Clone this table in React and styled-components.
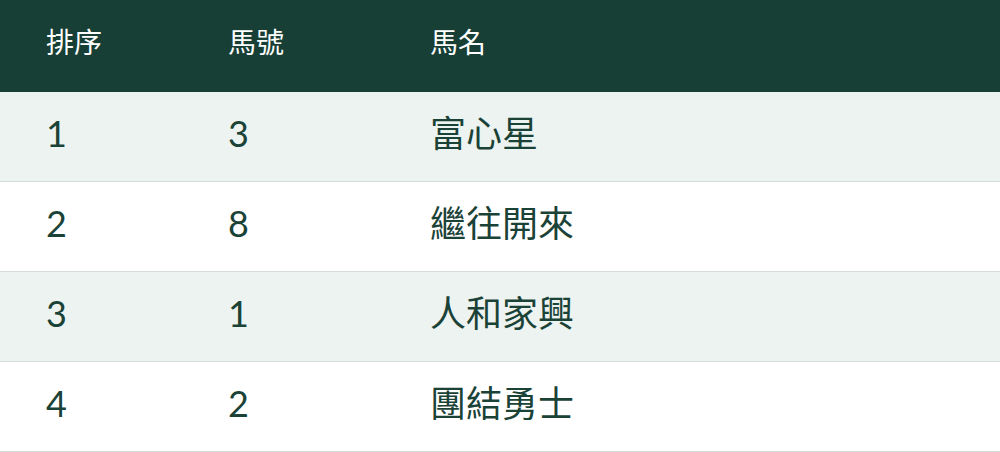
import React from "react";
import styled, { createGlobalStyle } from "styled-components";

const GlobalStyle = createGlobalStyle`
  body {
    margin: 0;
    background: #ffffff;
    font-family: Lato, "Noto Sans CJK TC", sans-serif;
  }
`;

const Table = styled.div`
  width: 1000px;
  display: flex;
  flex-direction: column;
`;

const Row = styled.div`
  display: grid;
  grid-template-columns: 182px 202px 1fr;
  align-items: center;
  padding-left: 46px;
  box-sizing: border-box;
  height: ${props => (props.head ? 92 : 90)}px;
  background: ${props =>
    props.head ? "#173f36" : props.shaded ? "#edf3f0" : "#ffffff"};
  border-bottom: ${props => (props.head ? "none" : "1px solid #d4dbd8")};
`;

const HeadCell = styled.div`
  color: #ffffff;
  font-size: 28px;
  line-height: 1;
  margin-top: -9px;
`;

const Cell = styled.div`
  color: #1b4237;
  font-size: 36px;
  line-height: 1;
  margin-top: -7px;
`;

const horses = [
  { rank: 1, num: 3, name: "富心星" },
  { rank: 2, num: 8, name: "繼往開來" },
  { rank: 3, num: 1, name: "人和家興" },
  { rank: 4, num: 2, name: "團結勇士" }
];

export default function App() {
  return (
    <>
      <GlobalStyle />
      <Table>
        <Row head>
          <HeadCell>排序</HeadCell>
          <HeadCell>馬號</HeadCell>
          <HeadCell>馬名</HeadCell>
        </Row>
        {horses.map((h, i) => (
          <Row key={h.rank} shaded={i % 2 === 0}>
            <Cell>{h.rank}</Cell>
            <Cell>{h.num}</Cell>
            <Cell>{h.name}</Cell>
          </Row>
        ))}
      </Table>
    </>
  );
}
